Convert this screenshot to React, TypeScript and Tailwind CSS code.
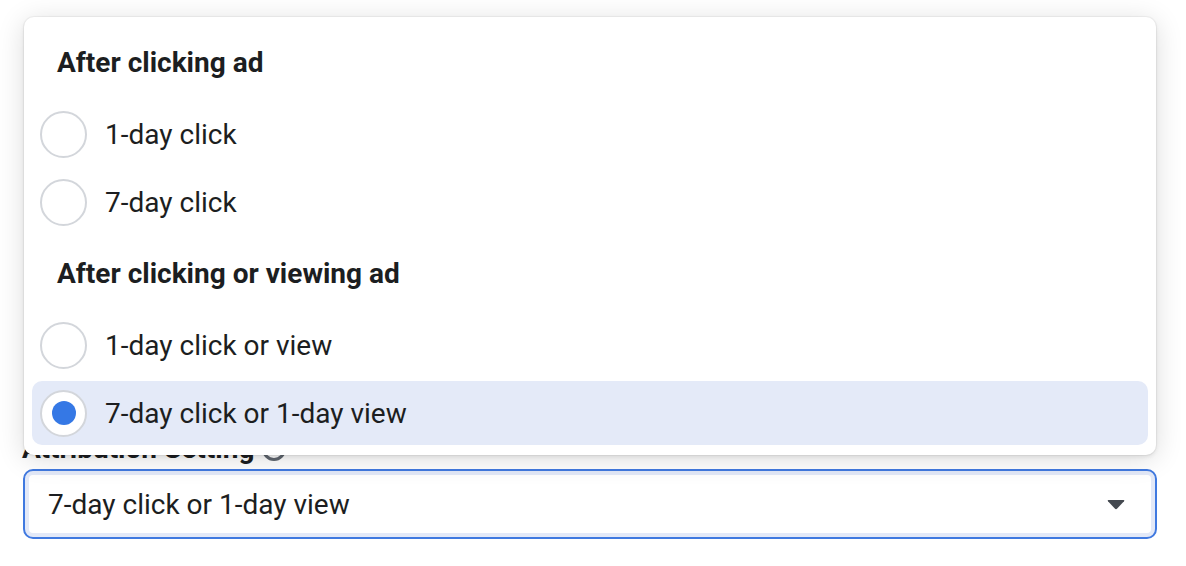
import React from "react";

function Radio({ checked }: { checked?: boolean }) {
  return (
    <div className="w-[47px] h-[47px] rounded-full border-2 border-[#d3d6db] bg-white flex items-center justify-center shrink-0">
      {checked && <div className="w-[24px] h-[24px] rounded-full bg-[#3578e5]" />}
    </div>
  );
}

function Row({ label, checked }: { label: string; checked?: boolean }) {
  return (
    <div className="h-[68px] py-[2px]">
      <div
        className={
          "h-full rounded-[10px] px-[8px] flex items-center gap-[18px] " +
          (checked ? "bg-[#e4eaf8]" : "")
        }
      >
        <Radio checked={checked} />
        <span className="text-[28px] leading-[33px] text-[#1c1e21]">{label}</span>
      </div>
    </div>
  );
}

function Header({ label }: { label: string }) {
  return (
    <div className="h-[75px] flex items-center pl-[25px]">
      <span className="text-[28px] leading-[33px] font-bold text-[#1c1e21]">{label}</span>
    </div>
  );
}

export default function App() {
  return (
    <div className="relative w-[1186px] h-[566px] bg-white overflow-hidden font-['Roboto',sans-serif]">
      <div className="pt-[432px] pl-[22px]">
        <div className="flex items-center gap-[8px] h-[33px]">
          <span className="text-[28px] leading-[33px] font-bold text-[#1c1e21]">Attribution Setting</span>
          <div className="w-[24px] h-[24px] rounded-full border-[3px] border-[#606770]" />
        </div>
        <div className="mt-[4px] ml-[1px] w-[1134px] h-[70px] rounded-[10px] border-2 border-[#4079e0] shadow-[inset_0_0_0_4px_#e3e9f8] bg-white flex items-center justify-between pl-[23px] pr-[30px]">
          <span className="text-[28px] leading-[33px] text-[#1c1e21]">7-day click or 1-day view</span>
          <svg width="18" height="11" viewBox="0 0 18 11">
            <path d="M1.5 1 H16.5 Q18 1 17 2.3 L10.2 9.6 Q9 10.8 7.8 9.6 L1 2.3 Q0 1 1.5 1 Z" fill="#444950" />
          </svg>
        </div>
      </div>

      <div className="absolute left-[24px] top-[17px] w-[1132px] h-[438px] bg-white rounded-[10px] p-[8px] shadow-[0_4px_28px_rgba(0,0,0,0.14),0_2px_4px_rgba(0,0,0,0.08),0_0_0_1px_rgba(0,0,0,0.04)]">
        <Header label="After clicking ad" />
        <Row label="1-day click" />
        <Row label="7-day click" />
        <Header label="After clicking or viewing ad" />
        <Row label="1-day click or view" />
        <Row label="7-day click or 1-day view" checked />
      </div>
    </div>
  );
}
